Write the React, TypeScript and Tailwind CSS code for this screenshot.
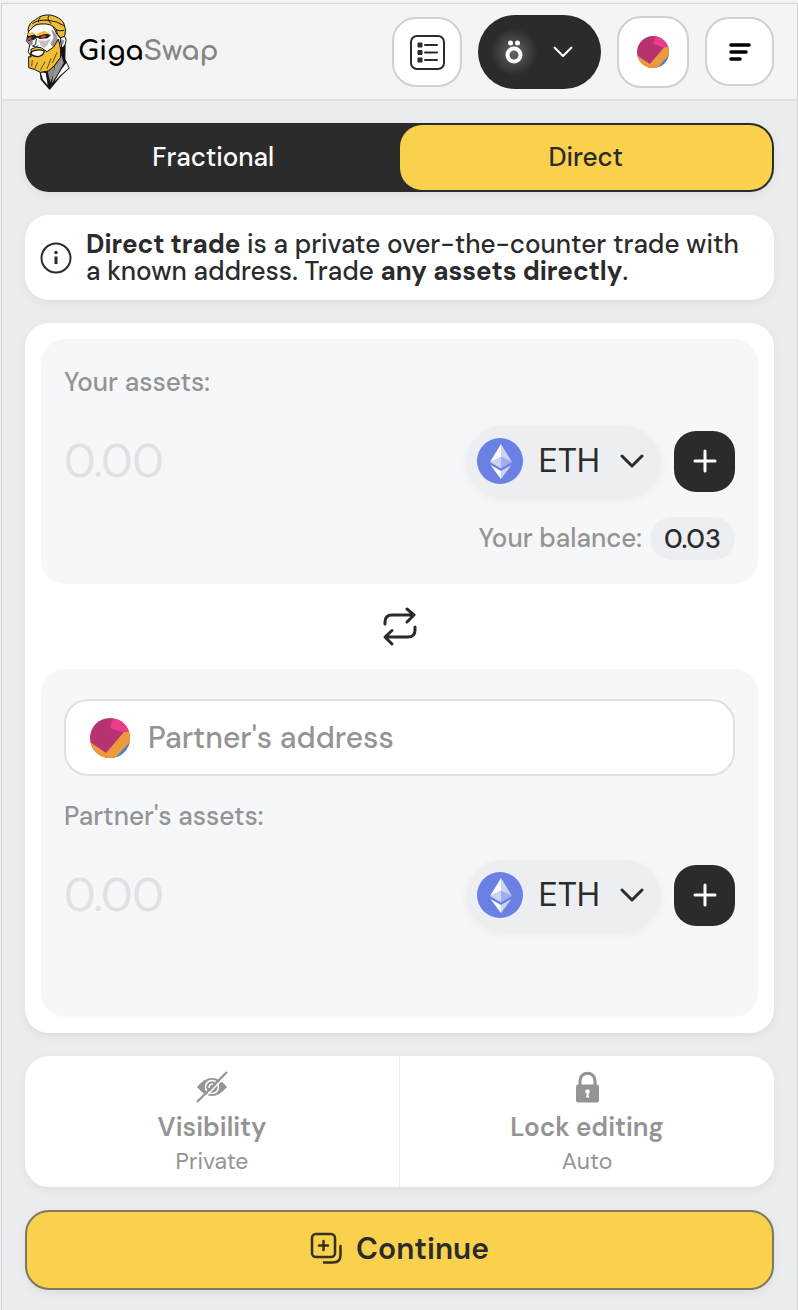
import { useState } from 'react';
import type { ReactNode } from 'react';

function GigaLogo() {
  return (
    <svg viewBox="18 15 135 232" className="h-[78px] w-[45px] flex-shrink-0" aria-hidden="true">
      {/* Neck */}
      <path d="M60 176 L65 214 L92 245 L126 204 L152 180 L139 152 L140 108 L118 120 Z" fill="#141414" />
      <path d="M65 192 L72 214 L86 230 L80 194 Z" fill="#fff" />
      <path d="M86 190 L106 172 L104 198 L94 222 Z" fill="#8c8c8c" />
      <path d="M108 172 L128 142 L134 164 L112 204 L98 226 Z" fill="#969696" />
      <path d="M128 182 L142 164 L149 179 L124 201 L106 220 Z" fill="#fff" />
      {/* Face */}
      <path d="M32 62 L56 46 L96 42 L114 78 L126 92 L118 124 L94 138 L38 148 L28 130 L32 110 L23 98 L26 78 Z" fill="#fff" stroke="#141414" strokeWidth="3" />
      <path d="M96 60 L112 78 L118 104 L104 120 L94 106 L104 88 Z" fill="#9a9a9a" />
      <path d="M58 96 L80 97 L94 92 L86 110 L76 120 L66 112 Z" fill="#c2c2c2" />
      <path d="M24 98 L40 96 L42 106 L34 112 Z" fill="#8b8b8b" />
      <path d="M24 84 L46 78 L54 84 L76 74 L96 80 L86 90 L62 92 L56 88 L42 96 L26 98 Z" fill="#222" />
      <path d="M24 76 L42 71 L47 77 L28 84 Z M52 76 L76 67 L94 77 L78 77 L56 83 Z" fill="#f0bd35" />
      <path d="M26 89 L38 86 L37 94 L29 96 Z M64 84 L78 80 L82 85 L68 90 Z" fill="#e2403a" />
      <path d="M52 92 L50 108 L40 113 L50 116 L58 112" fill="none" stroke="#222" strokeWidth="3" />
      {/* Ear */}
      <path d="M125 88 Q140 78 141 96 Q140 114 128 119 Z" fill="#fff" stroke="#141414" strokeWidth="3" />
      <path d="M130 94 Q137 92 134 104 L129 110 Z" fill="#8b8b8b" />
      {/* Hair */}
      <path d="M27 64 Q30 42 50 34 Q66 18 94 20 Q124 26 134 44 Q144 64 137 84 L124 88 L116 78 L112 64 Q98 44 66 47 Q46 47 38 61 L28 70 Z" fill="#f0bd35" stroke="#141414" strokeWidth="3" />
      <path d="M40 46 Q58 33 88 36 Q116 38 134 52 M64 28 Q57 34 58 42 M90 22 Q82 32 96 46 M110 64 Q122 70 136 66" fill="none" stroke="#141414" strokeWidth="3" />
      {/* Beard */}
      <path d="M36 123 Q52 112 66 118 L84 130 L104 116 L118 92 Q128 126 124 148 L106 172 L88 188 L64 192 L46 183 L29 178 L29 145 L36 146 Z" fill="#f0bd35" stroke="#141414" strokeWidth="3" />
      <path d="M38 130 Q56 120 76 128 Q74 142 56 145 Q43 145 36 138 Z" fill="#fff" stroke="#141414" strokeWidth="4" />
      <path d="M40 155 L38 174 M56 162 L47 181 M78 160 L64 186 M96 150 L84 182 M114 132 L100 164" fill="none" stroke="#141414" strokeWidth="2" />
    </svg>
  );
}

function Jazzicon({ className }: { className: string }) {
  return (
    <svg viewBox="0 0 40 40" className={`flex-shrink-0 rounded-full ${className}`} aria-hidden="true">
      <rect width="40" height="40" fill="#b8326f" />
      <path d="M23 0 H40 V15 L32 14 L20 10 Z" fill="#ea3b8c" />
      <path d="M0 24 L16 35 L34 14 H40 V40 H0 Z" fill="#ec9a3c" />
      <path d="M40 24 L25 40 H40 Z" fill="#3c85d4" />
    </svg>
  );
}

function ListIcon() {
  return (
    <svg viewBox="0 0 36 36" className="size-9" fill="none" stroke="#2b2b2b" strokeWidth="2" aria-hidden="true">
      <rect x="2" y="2" width="33" height="33" rx="6" />
      <path d="M16 11 H28 M16 18.5 H28 M16 26 H28" strokeLinecap="round" />
      <path d="M9 9 h4 v4 h-4 Z M9 16.5 h4 v4 h-4 Z M9 24 h4 v4 h-4 Z" fill="#2b2b2b" strokeWidth="1" strokeLinejoin="round" />
    </svg>
  );
}

function Chevron({ className }: { className: string }) {
  return (
    <svg viewBox="0 0 24 14" className={className} fill="none" stroke="currentColor" strokeLinecap="round" strokeLinejoin="round" aria-hidden="true">
      <path d="M2 2 L12 12 L22 2" />
    </svg>
  );
}

function EthIcon() {
  return (
    <svg viewBox="0 0 46 46" className="size-[46px] flex-shrink-0" aria-hidden="true">
      <circle cx="23" cy="23" r="23" fill="#6a80e3" />
      <path d="M24 6 L13 24 L24 19 Z" fill="#fff" />
      <path d="M24 6 L35 24 L24 19 Z" fill="#cbd3f6" />
      <path d="M13 24 L24 19 V30.500 Z" fill="#cbd3f6" />
      <path d="M35 24 L24 19 V30.500 Z" fill="#a0aef0" />
      <path d="M13.500 27 L24 33 V41 Z" fill="#fff" />
      <path d="M34.500 27 L24 33 V41 Z" fill="#cbd3f6" />
    </svg>
  );
}

function AssetRow({ label }: { label: string }) {
  return (
    <div className="flex h-[70px] items-center">
      <input
        type="text"
        placeholder="0.00"
        aria-label={label}
        className="w-0 min-w-0 flex-1 bg-transparent text-[46px] text-[#2b2b2b] outline-none placeholder:text-[#dee1e5]"
      />
      <button className="flex h-[70px] items-center rounded-full bg-[#edeef2] pr-4 pl-[10px] text-[#2b2b2b] shadow-[0_3px_10px_rgba(0,0,0,0.06)]">
        <EthIcon />
        <span className="ml-4 text-[34px] leading-none">ETH</span>
        <Chevron className="ml-5 w-6 stroke-3" />
      </button>
      <button
        aria-label="Add asset"
        className="ml-[14px] flex size-[61px] flex-shrink-0 items-center justify-center rounded-[22px] bg-[#2b2b2b]"
      >
        <svg viewBox="0 0 24 24" className="size-6" stroke="#fff" strokeWidth="3" strokeLinecap="round" aria-hidden="true">
          <path d="M12 2 V22 M2 12 H22" />
        </svg>
      </button>
    </div>
  );
}

function OptionButton({ icon, title, value }: { icon: ReactNode; title: string; value: string }) {
  return (
    <button className="flex flex-1 flex-col items-center pt-[15px] pb-3 text-[#949494]">
      {icon}
      <span className="mt-2 text-[26px] leading-8 font-semibold">{title}</span>
      <span className="mt-1 text-[23px] leading-7">{value}</span>
    </button>
  );
}

export default function App() {
  const [activeTab, setActiveTab] = useState<'fractional' | 'direct'>('direct');

  return (
    <div className="min-h-screen bg-[#f1f1f3] pt-[3px] pl-px font-['DM_Sans','Inter',sans-serif] text-[#2b2b2b]">
      <div className="min-h-[calc(100vh-3px)] border-x border-t border-[#d3d4d8] bg-[#ebecee]">
        {/* Header */}
        <header className="flex h-[97px] items-center border-b-2 border-[#dfe0e3] bg-[#f4f4f4] px-[23px]">
          <a href="#" className="flex items-center">
            <GigaLogo />
            <span className="ml-2 font-['Comfortaa','Quicksand','Lato',sans-serif] text-[27px] leading-none font-bold text-black">
              Giga<span className="text-[#858585]">Swap</span>
            </span>
          </a>
          <div className="ml-auto flex items-center gap-4">
            <button aria-label="Orders" className="flex size-[70px] items-center justify-center rounded-3xl border-2 border-[#d0d0d0] bg-white">
              <ListIcon />
            </button>
            <button aria-label="Network" className="flex h-[74px] w-[123px] items-center rounded-[37px] bg-[#2b2b2b] pl-3 text-white">
              <span className="flex size-12 items-center justify-center rounded-full bg-radial from-[#66676c] to-[#2b2b2b] to-70%">
                <svg viewBox="0 0 18 24" className="h-6 w-[18px]" aria-hidden="true">
                  <circle cx="5.500" cy="3" r="2.500" fill="#fff" />
                  <circle cx="12.500" cy="3" r="2.500" fill="#fff" />
                  <circle cx="9" cy="15" r="6.500" fill="none" stroke="#fff" strokeWidth="4" />
                </svg>
              </span>
              <Chevron className="ml-[15px] w-5 stroke-[2.5]" />
            </button>
            <button aria-label="Account" className="flex size-[72px] items-center justify-center rounded-3xl border-2 border-[#d0d0d0] bg-white">
              <Jazzicon className="size-8" />
            </button>
            <button aria-label="Menu" className="flex size-[69px] items-center justify-center rounded-3xl border-2 border-[#d0d0d0] bg-white">
              <svg viewBox="0 0 24 20" className="h-5 w-6" stroke="#000" strokeWidth="3.500" strokeLinecap="round" aria-hidden="true">
                <path d="M3 3 H21 M3 10 H18 M3 17 H12" />
              </svg>
            </button>
          </div>
        </header>

        <main className="flex flex-col gap-[23px] px-[23px] pt-[22px] pb-5">
          {/* Trade type */}
          <div className="flex h-[69px] rounded-3xl bg-[#2b2b2b] p-[2px] text-[26px] font-medium shadow-[0_3px_10px_rgba(0,0,0,0.06)]">
            <button
              onClick={() => setActiveTab('fractional')}
              className={`flex-1 rounded-[22px] ${activeTab === 'fractional' ? 'bg-[#f9d14d] text-[#2b2b2b]' : 'text-white'}`}
            >
              Fractional
            </button>
            <button
              onClick={() => setActiveTab('direct')}
              className={`flex-1 rounded-[22px] ${activeTab === 'direct' ? 'bg-[#f9d14d] text-[#2b2b2b]' : 'text-white'}`}
            >
              Direct
            </button>
          </div>

          <div className="flex min-h-[85px] items-center rounded-3xl bg-white px-[15px] shadow-[0_3px_10px_rgba(0,0,0,0.06)]">
            <svg viewBox="0 0 32 32" className="size-8 flex-shrink-0" fill="none" stroke="#2b2b2b" aria-hidden="true">
              <circle cx="16" cy="16" r="14.500" strokeWidth="2" />
              <path d="M16 14.500 V22" strokeWidth="3" />
              <circle cx="16" cy="10.500" r="1.700" fill="#2b2b2b" stroke="none" />
            </svg>
            <p className="ml-[14px] text-[26px] leading-[27px] font-medium">
              <b>Direct trade</b> is a private over-the-counter trade with a known address. Trade <b>any assets directly</b>.
            </p>
          </div>

          {/* Trade form */}
          <div className="rounded-3xl bg-white p-4 shadow-[0_3px_10px_rgba(0,0,0,0.06)]">
            <section className="rounded-3xl bg-[#f6f7f9] px-[23px] pt-[27px] pb-6 text-[#949494]">
              <h2 className="text-[26px] leading-8 font-medium">Your assets:</h2>
              <div className="mt-7">
                <AssetRow label="Your asset amount" />
              </div>
              <div className="mt-[21px] flex h-[43px] items-center justify-end text-[26px] font-medium">
                Your balance:
                <span className="ml-2 rounded-full bg-[#edeef2] px-[14px] py-[2px] text-[27px] leading-[39px]  text-[#2b2b2b]">0.03</span>
              </div>
            </section>

            <div className="flex h-[85px] items-center justify-center">
              <button aria-label="Swap sides">
                <svg viewBox="0 0 36 40" className="h-10 w-9" fill="none" stroke="#2b2b2b" strokeWidth="3" strokeLinecap="round" strokeLinejoin="round" aria-hidden="true">
                  <path d="M3 17 V15 Q3 8 10 8 H32 M25 2 L32 8 L25 15" />
                  <path d="M33 20 V23 Q33 30 26 30 H4 M10 23.500 L3 30 L10 37" />
                </svg>
              </button>
            </div>

            <section className="rounded-3xl bg-[#f6f7f9] px-[23px] pt-[30px] pb-[87px] text-[#949494]">
              <label className="flex h-[77px] items-center rounded-3xl border-2 border-[#dfe0e2] bg-white px-6">
                <Jazzicon className="size-10" />
                <input
                  type="text"
                  placeholder="Partner's address"
                  aria-label="Partner's address"
                  className="ml-[18px] w-0 min-w-0 flex-1 bg-transparent text-[30px] font-medium text-[#2b2b2b] outline-none placeholder:text-[#949494]"
                />
              </label>
              <h2 className="mt-6 text-[26px] leading-8 font-medium">Partner's assets:</h2>
              <div className="mt-7">
                <AssetRow label="Partner's asset amount" />
              </div>
            </section>
          </div>

          {/* Options */}
          <div className="flex divide-x divide-[#ececee] rounded-3xl bg-white shadow-[0_3px_10px_rgba(0,0,0,0.06)]">
            <OptionButton
              title="Visibility"
              value="Private"
              icon={
                <svg viewBox="0 0 32 32" className="size-8" fill="none" stroke="#949494" aria-hidden="true">
                  <path d="M1 16 Q16 -2 31 16 Q16 34 1 16 Z" fill="#949494" stroke="none" />
                  <circle cx="16" cy="16" r="6.500" stroke="#fff" strokeWidth="1.500" />
                  <path d="M13 17 Q13 13 17 13" stroke="#fff" strokeWidth="1.500" />
                  <path d="M2.500 32.500 L32.500 2.500" stroke="#fff" strokeWidth="1.500" />
                  <path d="M1 31 L31 1" strokeWidth="2.200" />
                </svg>
              }
            />
            <OptionButton
              title="Lock editing"
              value="Auto"
              icon={
                <svg viewBox="0 0 32 32" className="size-8" aria-hidden="true">
                  <path d="M9 15 V10 C9 -0.500 24 -0.500 24 10 V15" fill="none" stroke="#949494" strokeWidth="3" />
                  <rect x="5" y="13.500" width="23" height="18" rx="2" fill="#949494" />
                  <circle cx="16.500" cy="20.500" r="2.300" fill="#fff" />
                  <path d="M16 21 h1.200 l1 5.500 h-3.200 Z" fill="#fff" />
                </svg>
              }
            />
          </div>

          <button className="flex h-20 items-center justify-center gap-[14px] rounded-3xl border-2 border-[#7d7763] bg-[#f9d14d] pb-1 text-[30px] font-semibold text-[#2b2b2b] shadow-[0_3px_10px_rgba(0,0,0,0.06)]">
            <svg viewBox="0 0 32 32" className="size-8" fill="none" stroke="#35301f" strokeWidth="2.500" strokeLinecap="round" aria-hidden="true">
              <rect x="2" y="2" width="23" height="23" rx="4" />
              <path d="M13.500 9 V18 M9 13.500 H18 M30.500 14 V23 Q30.500 30.500 23 30.500 H14" />
            </svg>
            Continue
          </button>
        </main>
      </div>
    </div>
  );
}
